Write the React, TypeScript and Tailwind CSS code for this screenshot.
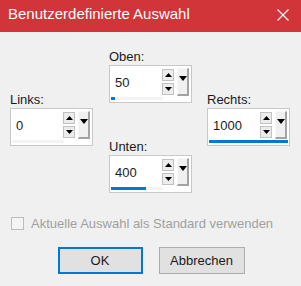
import React from "react";

type Field = { label: string; value: string; fill: number };

const FONT = "font-['Liberation_Sans',Arial,sans-serif]";

function Tri({ dir, w, h }: { dir: "up" | "down"; w: number; h: number }) {
  const pts = dir === "up" ? `0,${h} ${w / 2},0 ${w},${h}` : `0,0 ${w},0 ${w / 2},${h}`;
  return (
    <svg width={w} height={h} viewBox={`0 0 ${w} ${h}`}>
      <polygon points={pts} fill="#000" />
    </svg>
  );
}

function SpinField({ field }: { field: Field }) {
  return (
    <div className="w-[83px]">
      <div className="text-[13px] leading-[14px] text-[#1a1a1a]">{field.label}</div>
      <div className="mt-[1px] w-[83px] h-[38px] border border-[#c8c8c8] bg-white flex flex-col">
        <div className="flex h-[28px] mt-[2px]">
          <div className="flex-1 pl-[5px] pt-[7px] text-[13px] leading-[16px] text-[#1b1b1b]">
            {field.value}
          </div>
          <div className="w-[12px] flex flex-col gap-[2px] mt-[1px]">
            <div className="h-[12px] bg-[#ececec] border border-[#c2c2c2] flex items-center justify-center">
              <Tri dir="up" w={7} h={4} />
            </div>
            <div className="h-[12px] bg-[#ececec] border border-[#c2c2c2] flex items-center justify-center">
              <Tri dir="down" w={7} h={4} />
            </div>
          </div>
          <div className="w-[12px] h-[28px] ml-[3px] mr-[2px] bg-[#f0f0f0] border-t border-l border-[#f8f8f8] border-r-2 border-b-2 border-r-[#a3a3a3] border-b-[#a3a3a3] flex justify-center pt-[7px]">
            <Tri dir="down" w={8} h={5} />
          </div>
        </div>
        <div className="relative h-[3px] mt-[1px] mx-[1px]">
          <div className="w-[52px] h-full bg-[#f3f3f3]" />
          <div className="absolute left-0 top-0 h-full bg-[#0078d7]" style={{ width: `${field.fill * 100}%` }} />
        </div>
      </div>
    </div>
  );
}

export default function App() {
  const oben: Field = { label: "Oben:", value: "50", fill: 0.05 };
  const links: Field = { label: "Links:", value: "0", fill: 0 };
  const rechts: Field = { label: "Rechts:", value: "1000", fill: 1 };
  const unten: Field = { label: "Unten:", value: "400", fill: 0.44 };

  return (
    <div className={`w-[301px] h-[286px] bg-[#f0f0f0] ${FONT} overflow-hidden`}>
      <div className="h-[32px] bg-[#d1353a] flex justify-between pl-[8px] pr-[12px]">
        <span className="text-white text-[15px] leading-[16px] pt-[6px]">Benutzerdefinierte Auswahl</span>
        <svg width="12" height="12" viewBox="0 0 12 12" className="mt-[9px]">
          <path d="M0.5 0.5 L11.5 11.5 M11.5 0.5 L0.5 11.5" stroke="#fff" strokeWidth="1.1" fill="none" />
        </svg>
      </div>

      <div className="flex pl-[10px]">
        <div className="pt-[61px]">
          <SpinField field={links} />
        </div>
        <div className="ml-[16px] pt-[18px] flex flex-col gap-[37px]">
          <SpinField field={oben} />
          <SpinField field={unten} />
        </div>
        <div className="ml-[15px] pt-[61px]">
          <SpinField field={rechts} />
        </div>
      </div>

      <div className="flex items-center ml-[11px] mt-[24px] h-[13px]">
        <div className="w-[13px] h-[13px] border border-[#bcbcbc] bg-[#f4f4f4]" />
        <span className="ml-[7px] text-[13px] leading-[16px] text-[#a0a0a0]">
          Aktuelle Auswahl als Standard verwenden
        </span>
      </div>

      <div className="flex justify-center gap-[16px] mt-[17px] pl-[1px]">
        <button className="w-[85px] h-[27px] bg-[#e1e1e1] border-2 border-[#0078d7] text-[13px] text-[#1a1a1a]">
          OK
        </button>
        <button className="w-[86px] h-[27px] bg-[#e1e1e1] border border-[#adadad] text-[13px] text-[#1a1a1a]">
          Abbrechen
        </button>
      </div>
    </div>
  );
}
